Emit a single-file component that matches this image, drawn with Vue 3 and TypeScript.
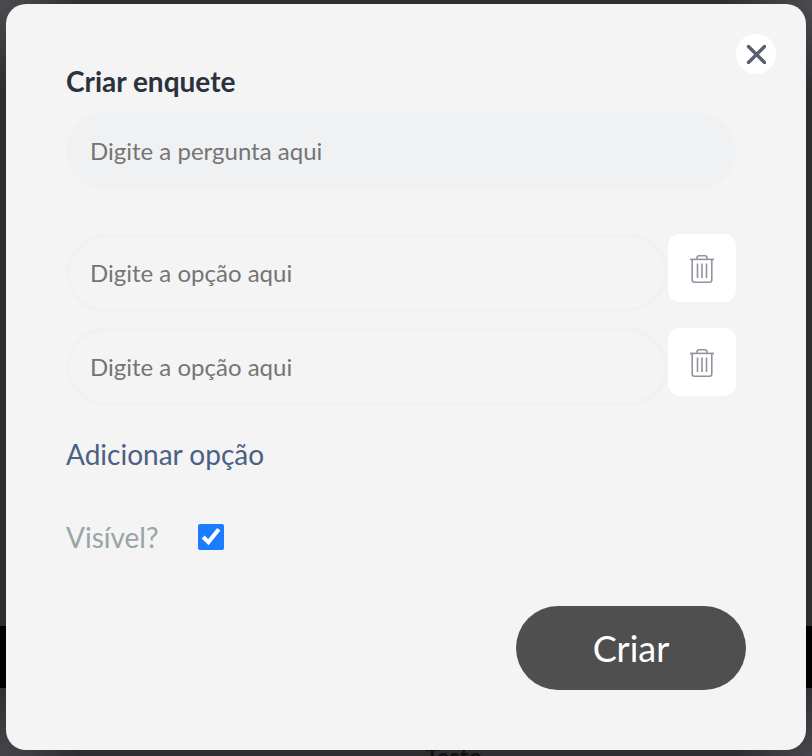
<script setup lang="ts">
import { ref } from 'vue'

const question = ref('')
const options = ref<string[]>(['', ''])
const visible = ref(true)

function addOption(): void {
  options.value.push('')
}

function removeOption(index: number): void {
  options.value.splice(index, 1)
}
</script>

<template>
  <div class="page">
    <div class="band"></div>
    <div class="behind">Teste</div>
    <section class="modal">
      <button class="close" type="button" aria-label="Fechar">
        <svg width="20" height="20" viewBox="0 0 20 20" fill="none">
          <path d="M2.5 2.5 L18.5 18.5 M18.5 2.5 L2.5 18.5" stroke="#56606f" stroke-width="3.4" stroke-linecap="round" />
        </svg>
      </button>
      <h2 class="title">Criar enquete</h2>
      <input v-model="question" class="question" placeholder="Digite a pergunta aqui" />
      <div class="options">
        <div v-for="(option, index) in options" :key="index" class="option">
          <input v-model="options[index]" class="option-input" placeholder="Digite a opção aqui" />
          <button class="trash" type="button" aria-label="Remover" @click="removeOption(index)">
            <svg class="trash-icon" width="24" height="28" viewBox="0 0 24 28" fill="none" stroke="#8f949c" stroke-width="1.6">
              <path d="M0 4.4 H24" />
              <path d="M7 4 V3 Q7 .8 9.2 .8 H14.8 Q17 .8 17 3 V4" />
              <path d="M2.2 4.4 V25 Q2.2 27.2 4.4 27.2 H19.6 Q21.8 27.2 21.8 25 V4.4" />
              <path d="M7.5 8.5 V23 M12 8.5 V23 M16.5 8.5 V23" />
            </svg>
          </button>
        </div>
      </div>
      <button class="add" type="button" @click="addOption">Adicionar opção</button>
      <label class="visible">
        <span class="visible-text">Visível?</span>
        <input v-model="visible" class="check" type="checkbox" />
      </label>
      <div class="footer">
        <button class="submit" type="button">Criar</button>
      </div>
    </section>
  </div>
</template>

<style>
html, body {
  margin: 0;
  padding: 0;
  background: #2e2e31;
}
</style>

<style scoped>
.page {
  position: relative;
  width: 812px;
  height: 756px;
  overflow: hidden;
  background:
    radial-gradient(circle at 0 0, #4a4a50 0, rgba(74, 74, 80, 0) 90px),
    radial-gradient(circle at 100% 0, #4a4a50 0, rgba(74, 74, 80, 0) 90px),
    radial-gradient(circle at 0 100%, #44444a 0, rgba(68, 68, 74, 0) 80px),
    radial-gradient(circle at 100% 100%, #44444a 0, rgba(68, 68, 74, 0) 80px),
    #2e2e31;
  padding: 4px 6px 6px;
  box-sizing: border-box;
  font-family: Lato, "Open Sans", sans-serif;
}
.band {
  position: absolute;
  left: 0;
  right: 0;
  top: 626px;
  height: 62px;
  background: #000;
}
.behind {
  position: absolute;
  left: 425px;
  top: 743px;
  font-size: 24px;
  font-weight: 700;
  color: #111;
  line-height: 28px;
}
.modal {
  position: relative;
  width: 800px;
  height: 746px;
  box-sizing: border-box;
  background: #f4f4f4;
  border-radius: 20px;
  padding: 60px 70px 0 60px;
  display: flex;
  flex-direction: column;
}
.close {
  position: absolute;
  top: 30px;
  right: 30px;
  width: 40px;
  height: 40px;
  padding: 0;
  border: none;
  border-radius: 50%;
  background: #fff;
  display: flex;
  align-items: center;
  justify-content: center;
}
.title {
  margin: 0;
  font-size: 28px;
  line-height: 34px;
  font-weight: 700;
  color: #29323d;
}
.question {
  margin-top: 14px;
  height: 78px;
  width: 670px;
  box-sizing: border-box;
  border: none;
  border-radius: 39px;
  background: #f0f1f3;
  padding: 0 24px 2px;
  font: 24px Lato, sans-serif;
  color: #333;
  outline: none;
}
.question::placeholder,
.option-input::placeholder {
  color: #757575;
  opacity: 1;
}
.options {
  margin-top: 44px;
  display: flex;
  flex-direction: column;
  gap: 18px;
}
.option {
  display: flex;
  align-items: flex-start;
  height: 76px;
}
.option-input {
  width: 602px;
  height: 78px;
  box-sizing: border-box;
  border: 4px solid #f0f1f3;
  border-radius: 39px;
  background: transparent;
  padding: 0 20px 2px;
  font: 24px Lato, sans-serif;
  color: #333;
  outline: none;
}
.trash {
  width: 68px;
  height: 68px;
  padding: 0;
  border: none;
  border-radius: 12px;
  background: #fff;
  display: flex;
  align-items: center;
  justify-content: center;
}
.trash-icon {
  margin-top: 2px;
}
.add {
  align-self: flex-start;
  margin-top: 30px;
  padding: 0;
  border: none;
  background: none;
  font: 28px/40px Lato, sans-serif;
  color: #4a6084;
}
.visible {
  margin-top: 43px;
  display: flex;
  align-items: center;
  height: 40px;
}
.visible-text {
  width: 132px;
  font-size: 28px;
  color: #97a5a6;
}
.check {
  margin: 0;
  width: 26px;
  height: 26px;
  accent-color: #1a7cff;
}
.footer {
  margin-top: 49px;
  margin-right: -10px;
  display: flex;
  justify-content: flex-end;
}
.submit {
  width: 230px;
  height: 84px;
  border: none;
  border-radius: 42px;
  background: #4f4f4f;
  color: #fff;
  font: 36px Lato, sans-serif;
}
</style>
